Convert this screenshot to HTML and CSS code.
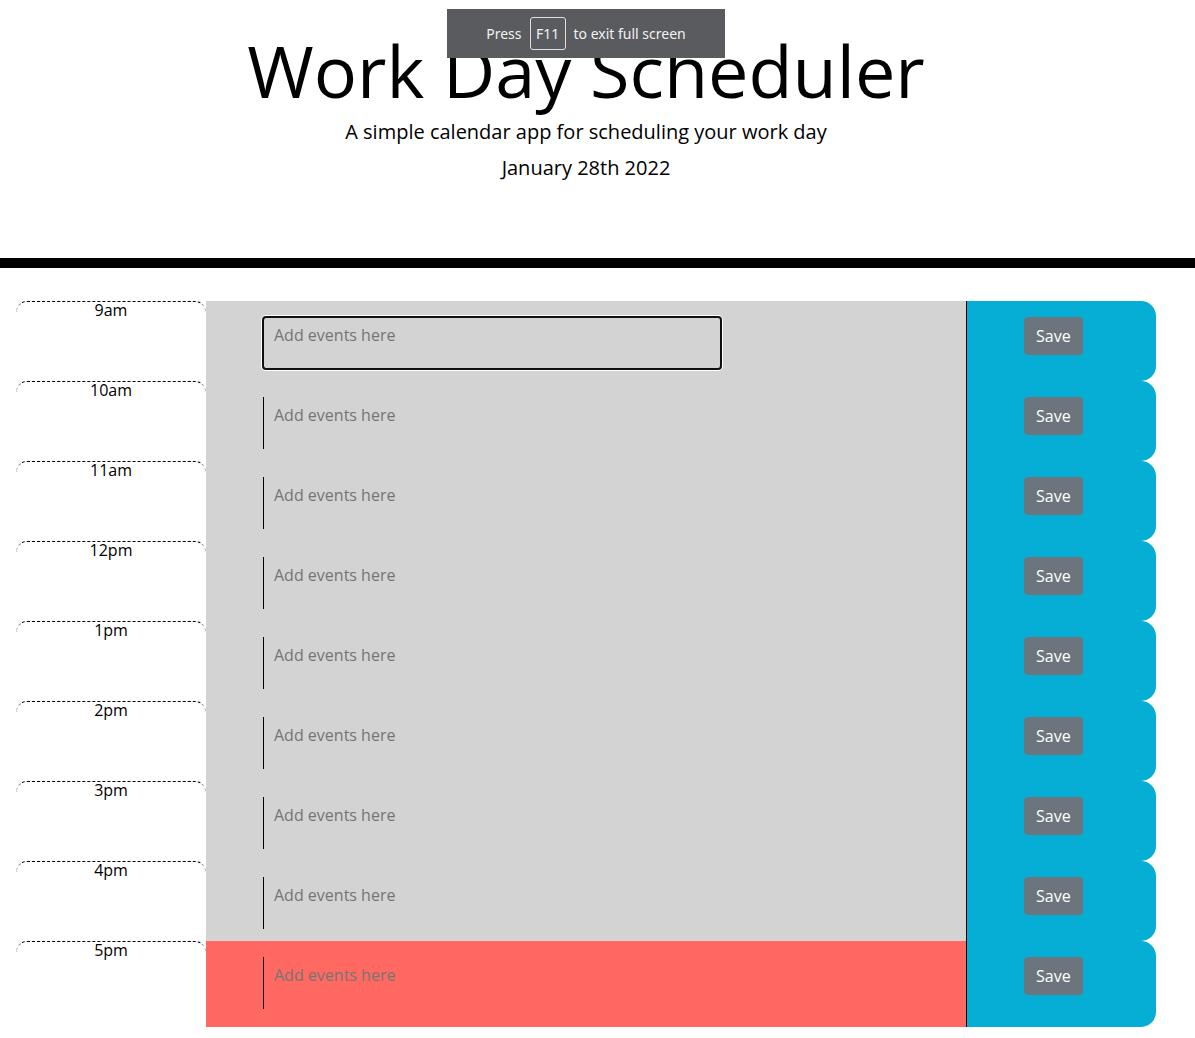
FILE: index.html
```html
<!DOCTYPE html>
<html lang="en">
<head>
<meta charset="utf-8">
<title>Work Day Scheduler</title>
<link rel="stylesheet" href="styles.css">
</head>
<body>
<header class="jumbotron">
  <h1 class="display-3">Work Day Scheduler</h1>
  <p class="lead">A simple calendar app for scheduling your work day</p>
  <p class="current-day">January 28th 2022</p>
</header>

<div class="fs-toast">
  <span>Press</span>
  <span class="key">F11</span>
  <span>to exit full screen</span>
</div>

<main class="container">
  <div class="row">
    <div class="hour">9am</div>
    <div class="description past"><textarea class="focused" placeholder="Add events here"></textarea></div>
    <div class="save-col"><button class="saveBtn">Save</button></div>
  </div>
  <div class="row">
    <div class="hour">10am</div>
    <div class="description past"><textarea placeholder="Add events here"></textarea></div>
    <div class="save-col"><button class="saveBtn">Save</button></div>
  </div>
  <div class="row">
    <div class="hour">11am</div>
    <div class="description past"><textarea placeholder="Add events here"></textarea></div>
    <div class="save-col"><button class="saveBtn">Save</button></div>
  </div>
  <div class="row">
    <div class="hour">12pm</div>
    <div class="description past"><textarea placeholder="Add events here"></textarea></div>
    <div class="save-col"><button class="saveBtn">Save</button></div>
  </div>
  <div class="row">
    <div class="hour">1pm</div>
    <div class="description past"><textarea placeholder="Add events here"></textarea></div>
    <div class="save-col"><button class="saveBtn">Save</button></div>
  </div>
  <div class="row">
    <div class="hour">2pm</div>
    <div class="description past"><textarea placeholder="Add events here"></textarea></div>
    <div class="save-col"><button class="saveBtn">Save</button></div>
  </div>
  <div class="row">
    <div class="hour">3pm</div>
    <div class="description past"><textarea placeholder="Add events here"></textarea></div>
    <div class="save-col"><button class="saveBtn">Save</button></div>
  </div>
  <div class="row">
    <div class="hour">4pm</div>
    <div class="description past"><textarea placeholder="Add events here"></textarea></div>
    <div class="save-col"><button class="saveBtn">Save</button></div>
  </div>
  <div class="row row-last">
    <div class="hour">5pm</div>
    <div class="description present"><textarea placeholder="Add events here"></textarea></div>
    <div class="save-col"><button class="saveBtn">Save</button></div>
  </div>
</main>
</body>
</html>
```

FILE: styles.css
```css
* { box-sizing: border-box; }

html, body {
  margin: 0;
  padding: 0;
  background: #fff;
  color: #000;
  font-family: "Open Sans", "Noto Sans", sans-serif;
  font-size: 16px;
}

.jumbotron {
  height: 268px;
  padding: 27px 23px 0 0;
  text-align: center;
  border-bottom: 10px solid #000;
}

.display-3 {
  margin: 0;
  font-size: 72px;
  font-weight: 400;
  line-height: 86px;
}

.lead {
  margin: 4px 0 0;
  font-size: 20px;
  line-height: 30px;
  font-weight: 400;
}

.current-day {
  margin: 6px 0 0;
  font-size: 20px;
  line-height: 30px;
}

.fs-toast {
  position: absolute;
  left: 447px;
  top: 9px;
  width: 278px;
  height: 49px;
  background: #595b5f;
  color: #f2f2f2;
  font-family: "Noto Sans", "Open Sans", sans-serif;
  font-size: 14px;
  display: flex;
  align-items: center;
  justify-content: center;
  gap: 8px;
}

.fs-toast .key {
  border: 1px solid #e0e0e0;
  border-radius: 3px;
  height: 33px;
  width: 36px;
  display: flex;
  align-items: center;
  justify-content: center;
}

.container {
  margin: 33px 0 0 16px;
  width: 1140px;
}

.row {
  display: flex;
  align-items: flex-start;
  height: 80px;
}

.row-last { height: 86px; }

.description,
.save-col { align-self: stretch; }

.hour {
  width: 190px;
  height: 11px;
  flex: none;
  border-top: 1px dashed #000;
  border-left: 1px dashed #b0b0b0;
  border-right: 1px dashed #b0b0b0;
  border-radius: 15px 15px 0 0;
  text-align: center;
  font-size: 16px;
  line-height: 14px;
  padding-top: 1px;
  color: #000;
}

.description {
  width: 760px;
  flex: none;
  padding: 16px 0 0 57px;
}

.past { background: #d3d3d3; }
.present { background: #ff6961; }

textarea {
  display: block;
  margin: 0;
  width: 458px;
  height: 52px;
  padding: 7px 10px 5px;
  border: none;
  border-left: 1px solid #000;
  background: transparent;
  resize: none;
  font-family: "Open Sans", sans-serif;
  font-size: 16px;
  line-height: 22px;
  color: #000;
  overflow: hidden;
}

textarea::placeholder { color: #757575; opacity: 1; }

textarea.focused {
  border-radius: 3px;
  outline: 2px solid #101010;
  outline-offset: -1px;
  box-shadow: 0 0 0 2px #fff;
}

.save-col {
  width: 190px;
  flex: none;
  background: #06aed5;
  border-left: 1px solid #000;
  border-radius: 0 15px 15px 0;
  padding: 16px 0 0 57px;
}

.saveBtn {
  display: block;
  height: 38px;
  padding: 6px 11px;
  border: 1px solid #6c757d;
  border-radius: 4px;
  background: #6c757d;
  color: #fff;
  font-family: "Open Sans", sans-serif;
  font-size: 16px;
  line-height: 24px;
}
```
